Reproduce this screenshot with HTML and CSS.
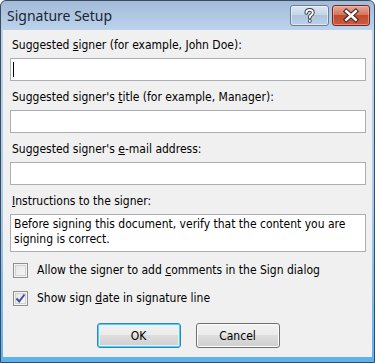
FILE: index.html
```html
<!DOCTYPE html>
<html lang="en">

<head>
    <meta charset="UTF-8">
    <title>Signature Setup</title>
    <link rel="stylesheet" href="styles.css">
</head>

<body>
    <div class="window">
        <div class="titlebar">
            <span class="title">Signature Setup</span>
            <div class="caption-buttons">
                <button class="cap-btn help" type="button" aria-label="Help">
                    <svg width="39" height="21" viewBox="0 0 39 21">
                        <path d="M16.2 7.6 Q16.2 4.6 19.6 4.6 Q23 4.6 23 7.4 Q23 9.2 21.2 10.1 Q19.8 10.8 19.8 12.6"
                            fill="none" stroke="#3a3f48" stroke-width="4" stroke-linecap="round" />
                        <circle cx="19.8" cy="16.2" r="2" fill="#3a3f48" />
                        <path d="M16.2 7.6 Q16.2 4.6 19.6 4.6 Q23 4.6 23 7.4 Q23 9.2 21.2 10.1 Q19.8 10.8 19.8 12.6"
                            fill="none" stroke="#fff" stroke-width="2" stroke-linecap="round" />
                        <circle cx="19.8" cy="16.2" r="1.1" fill="#fff" />
                    </svg>
                </button>
                <button class="cap-btn close" type="button" aria-label="Close">
                    <svg width="38" height="21" viewBox="0 0 38 21">
                        <path d="M14 6 L24 15 M24 6 L14 15" stroke="#4a2a26" stroke-width="5" stroke-linecap="square" />
                        <path d="M14 6 L24 15 M24 6 L14 15" stroke="#fff" stroke-width="2.6" stroke-linecap="square" />
                    </svg>
                </button>
            </div>
        </div>

        <div class="content">
            <div class="field">
                <label class="label" for="signer">Suggested <u>s</u>igner (for example, John Doe):</label>
                <div class="input focused" id="signer"><span class="caret"></span></div>
            </div>

            <div class="field">
                <label class="label">Suggested signer's <u>t</u>itle (for example, Manager):</label>
                <div class="input"></div>
            </div>

            <div class="field">
                <label class="label">Suggested signer's <u>e</u>-mail address:</label>
                <div class="input"></div>
            </div>

            <div class="field">
                <label class="label"><u>I</u>nstructions to the signer:</label>
                <div class="textarea">Before signing this document, verify that the content you are signing is correct.</div>
            </div>

            <div class="checks">
                <div class="check-row">
                    <span class="checkbox"></span>
                    <span>Allow the signer to add <u>c</u>omments in the Sign dialog</span>
                </div>
                <div class="check-row">
                    <span class="checkbox">
                        <svg width="13" height="13" viewBox="0 0 13 13">
                            <path d="M2.5 6.5 L5.2 9.5 L10.5 2.5" fill="none" stroke="#3d5494" stroke-width="2" />
                        </svg>
                    </span>
                    <span>Show sign <u>d</u>ate in signature line</span>
                </div>
            </div>

            <div class="buttons">
                <button class="btn default" type="button">OK</button>
                <button class="btn" type="button">Cancel</button>
            </div>
        </div>
    </div>
</body>

</html>
```

FILE: styles.css
```css
body {
    margin: 0;
    font-family: "DejaVu Sans Condensed", "DejaVu Sans", sans-serif;
    font-size: 12px;
    color: #000;
}

.window {
    width: 375px;
    height: 363px;
    box-sizing: border-box;
    display: flex;
    flex-direction: column;
    padding: 0 2px 5px 2px;
    border: 1px solid #3c4c60;
    border-radius: 6px 6px 0 0;
    background: linear-gradient(to bottom, #a3bbd7 0, #bdd3ec 29px, #a9cbea 55%, #5db2ef 100%);
}

.titlebar {
    height: 29px;
    display: flex;
    align-items: flex-start;
    justify-content: space-between;
}

.title {
    font-family: "Noto Sans", sans-serif;
    font-size: 14px;
    color: #1b2533;
    margin: 5px 0 0 4px;
}

.caption-buttons {
    display: flex;
    gap: 3px;
    margin: 4px 2px 0 0;
}

.cap-btn {
    height: 21px;
    padding: 0;
    border-radius: 3px;
    display: flex;
    align-items: center;
    justify-content: center;
}

.help {
    width: 39px;
    border: 1px solid #6b7d96;
    background: linear-gradient(to bottom, #dbe6f2 0, #c5d6e9 45%, #b0c5dd 50%, #bcd0e6 100%);
    box-shadow: inset 0 0 0 1px rgba(255, 255, 255, 0.5);
}

.close {
    width: 38px;
    border: 1px solid #6e2a22;
    background: linear-gradient(to bottom, #e6a698 0, #d4775f 45%, #c24a30 50%, #cc5b3f 100%);
    box-shadow: inset 0 0 0 1px rgba(255, 210, 200, 0.45);
}

.content {
    flex: 1;
    background: #f0f0f0;
    padding: 7px 6px 0 7px;
    display: flex;
    flex-direction: column;
}

.field {
    margin-bottom: 8px;
}

.label {
    display: block;
    height: 16px;
    line-height: 16px;
    padding-left: 2px;
    margin-bottom: 5px;
}

.input {
    height: 23px;
    box-sizing: border-box;
    border: 1px solid #abadb3;
    background: #fff;
    padding: 3px 2px;
}

.caret {
    display: block;
    width: 1px;
    height: 15px;
    background: #000;
}

.textarea {
    height: 38px;
    box-sizing: border-box;
    border: 1px solid #abadb3;
    background: #fff;
    padding: 2px 3px;
    line-height: 15px;
}

.checks {
    margin-top: 2px;
    display: flex;
    flex-direction: column;
    gap: 12px;
}

.check-row {
    display: flex;
    align-items: center;
    gap: 9px;
    height: 16px;
    padding-left: 3px;
}

.checkbox {
    width: 15px;
    height: 15px;
    box-sizing: border-box;
    border: 1px solid #8e8f8f;
    background: linear-gradient(to bottom right, #e4e4e4, #f8f8f8);
    box-shadow: inset 0 0 0 1px #f4f4f4, inset 0 0 0 2px #d2d2d2;
    display: flex;
    align-items: center;
    justify-content: center;
}

.buttons {
    display: flex;
    justify-content: center;
    gap: 15px;
    margin-top: 17px;
}

.btn {
    width: 84px;
    height: 25px;
    font-family: inherit;
    font-size: 12px;
    color: #000;
    border: 1px solid #707070;
    border-radius: 3px;
    background: linear-gradient(to bottom, #f2f2f2 0, #ebebeb 49%, #dddddd 50%, #cfcfcf 100%);
    box-shadow: inset 0 0 0 1px #fcfcfc;
}

.btn.default {
    border-color: #3c7fb1;
    box-shadow: inset 0 0 0 1px #48d5fc, inset 0 0 0 2px #e4f4fc;
}
```
